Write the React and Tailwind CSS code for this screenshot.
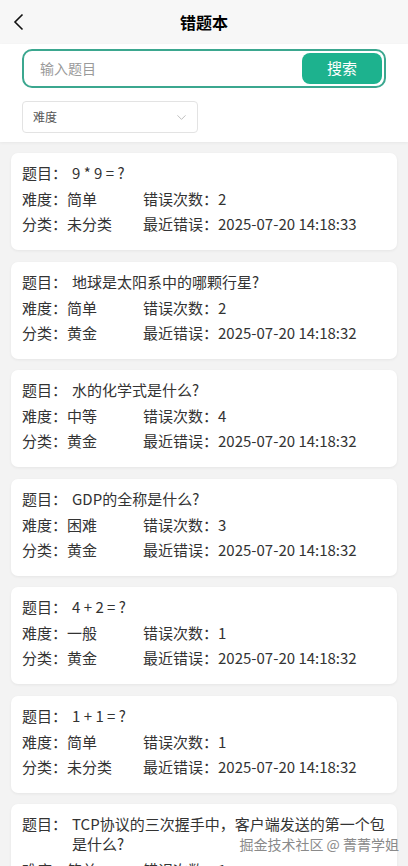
import { ChevronDown } from 'lucide-react';

const items = [
  { q: '9 * 9 = ?', level: '简单', count: 2, cat: '未分类', time: '2025-07-20 14:18:33' },
  { q: '地球是太阳系中的哪颗行星?', level: '简单', count: 2, cat: '黄金', time: '2025-07-20 14:18:32' },
  { q: '水的化学式是什么?', level: '中等', count: 4, cat: '黄金', time: '2025-07-20 14:18:32' },
  { q: 'GDP的全称是什么?', level: '困难', count: 3, cat: '黄金', time: '2025-07-20 14:18:32' },
  { q: '4 + 2 = ?', level: '一般', count: 1, cat: '黄金', time: '2025-07-20 14:18:32' },
  { q: '1 + 1 = ?', level: '简单', count: 1, cat: '未分类', time: '2025-07-20 14:18:32' },
  { q: 'TCP协议的三次握手中，客户端发送的第一个包是什么?', level: '简单', count: 1, cat: '未分类', time: '2025-07-20 14:18:32' },
];

function WrongCard({ item }) {
  return (
    <div className="bg-white rounded-[7px] shadow-[0_1px_3px_rgba(0,0,0,0.06)] pt-[10px] pb-[11px] px-[11px] mb-[11.5px] text-[15px] leading-[20px] text-[#333]">
      <div className="flex mb-[6px]">
        <span className="shrink-0">题目：</span>
        <span className="ml-[5px] flex-1">{item.q}</span>
      </div>
      <div className="flex mb-[5px]">
        <span className="w-[121px] shrink-0">难度：{item.level}</span>
        <span>错误次数：{item.count}</span>
      </div>
      <div className="flex mb-[5px]">
        <span className="w-[121px] shrink-0">分类：{item.cat}</span>
        <span>最近错误：{item.time}</span>
      </div>
    </div>
  );
}

export default function App() {
  return (
    <div
      className="w-[408px] h-[866px] overflow-hidden bg-[#f3f3f3] relative"
      style={{ fontFamily: '"Noto Sans CJK SC", sans-serif' }}
    >
      {/* header */}
      <div className="h-[44px] bg-[#f7f7f7] flex items-center justify-center relative">
        <svg className="absolute left-[12px] top-[13px]" width="14" height="18" viewBox="0 0 14 18" fill="none">
          <path d="M10.5 1.5 L3 9 L10.5 16.5" stroke="#111" strokeWidth="1.6" />
        </svg>
        <h1 className="text-[16px] font-bold text-black">错题本</h1>
      </div>

      {/* filters */}
      <div className="bg-white pt-[5px] pb-[9px] px-[22px] shadow-[0_1px_3px_rgba(0,0,0,0.05)] relative z-10">
        <div className="h-[39px] border-2 border-[#3ba78f] rounded-[10px] flex items-center pl-[16px] pr-[2px]">
          <span className="flex-1 text-[14px] text-[#9a9a9a]">输入题目</span>
          <button className="w-[80px] h-[31px] rounded-[8px] bg-[#1db28e] text-white text-[15px]">搜索</button>
        </div>
        <div className="mt-[13px] w-[176px] h-[32px] border border-[#e3e3e3] rounded-[4px] flex items-center justify-between pl-[10px] pr-[8px]">
          <span className="text-[12px] text-[#555]">难度</span>
          <ChevronDown size={15} strokeWidth={1.2} className="text-[#aaa]" />
        </div>
      </div>

      {/* list */}
      <div className="px-[11px] pt-[11px]">
        {items.map((it, i) => (
          <WrongCard key={i} item={it} />
        ))}
      </div>

      <div className="absolute right-[9px] bottom-[11px] text-[14px] text-[#8a8a8a]">
        掘金技术社区 @ 菁菁学姐
      </div>
    </div>
  );
}
